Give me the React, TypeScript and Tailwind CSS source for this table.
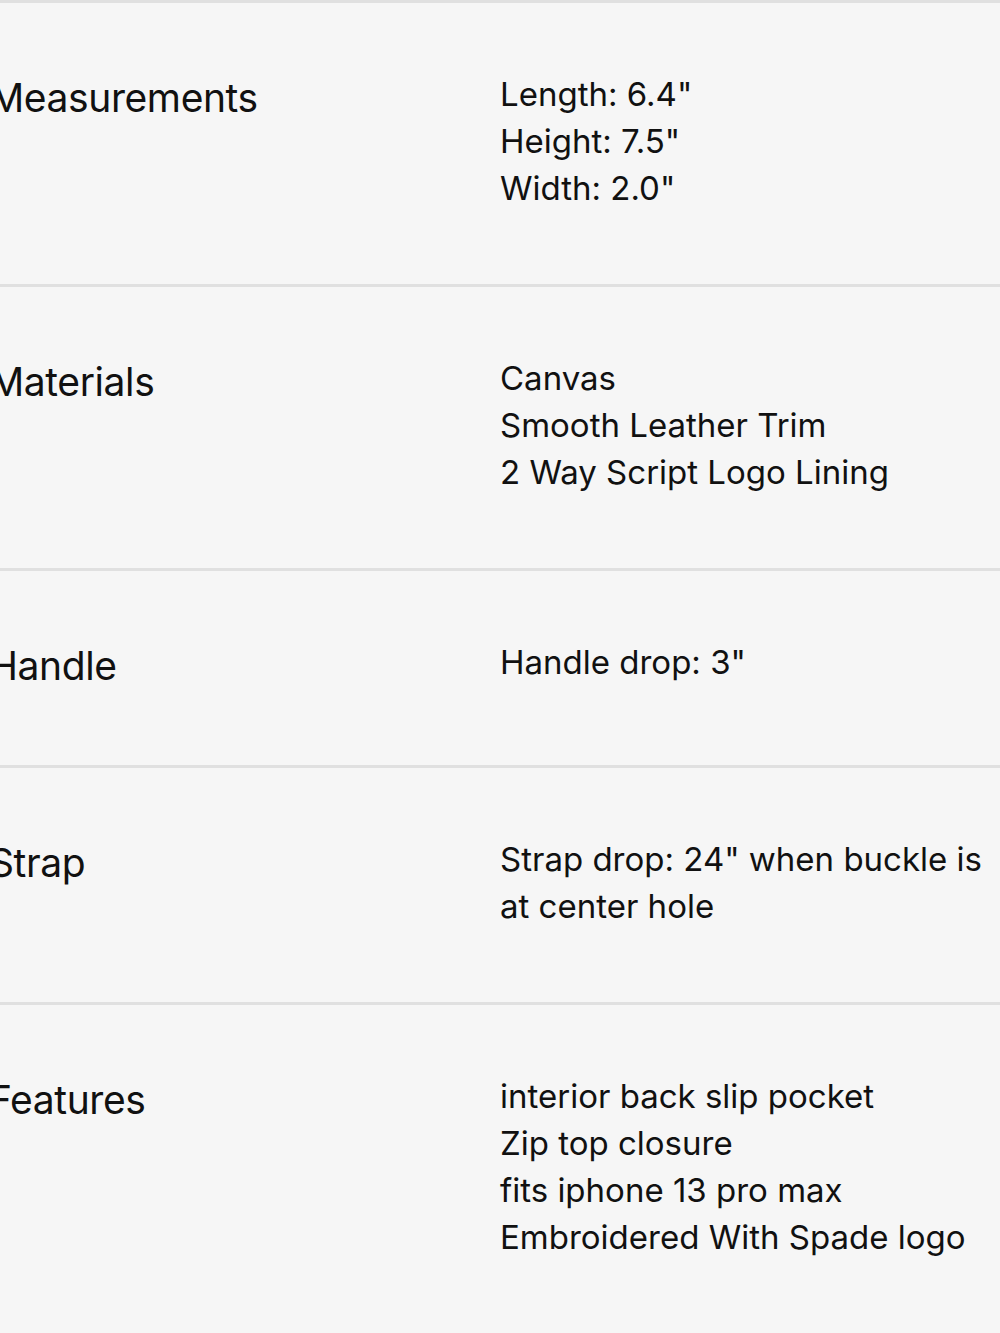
import React from "react";

const rows: { label: string; values: string[] }[] = [
  { label: "Measurements", values: ['Length: 6.4"', 'Height: 7.5"', 'Width: 2.0"'] },
  { label: "Materials", values: ["Canvas", "Smooth Leather Trim", "2 Way Script Logo Lining"] },
  { label: "Handle", values: ['Handle drop: 3"'] },
  { label: "Strap", values: ['Strap drop: 24" when buckle is at center hole'] },
  {
    label: "Features",
    values: ["interior back slip pocket", "Zip top closure", "fits iphone 13 pro max", "Embroidered With Spade logo"],
  },
];

export default function App() {
  return (
    <div
      className="w-[1000px] h-[1333px] overflow-hidden bg-[#f6f6f6] text-[#111111]"
      style={{ fontFamily: "Inter, 'Noto Sans', sans-serif" }}
    >
      <div className="border-t-[3px] border-[#e0e0e0]">
        {rows.map((r) => (
          <div key={r.label} className="flex items-start pt-[68px] pb-[72px] border-b-[3px] border-[#e0e0e0]">
            <div className="-ml-[11px] w-[511px] shrink-0 text-[39px] leading-[54px] tracking-[-0.4px]">{r.label}</div>
            <div className="flex-1 pr-[18px] text-[33px] leading-[47px]">
              {r.values.map((v) => (
                <div key={v}>{v}</div>
              ))}
            </div>
          </div>
        ))}
      </div>
    </div>
  );
}
